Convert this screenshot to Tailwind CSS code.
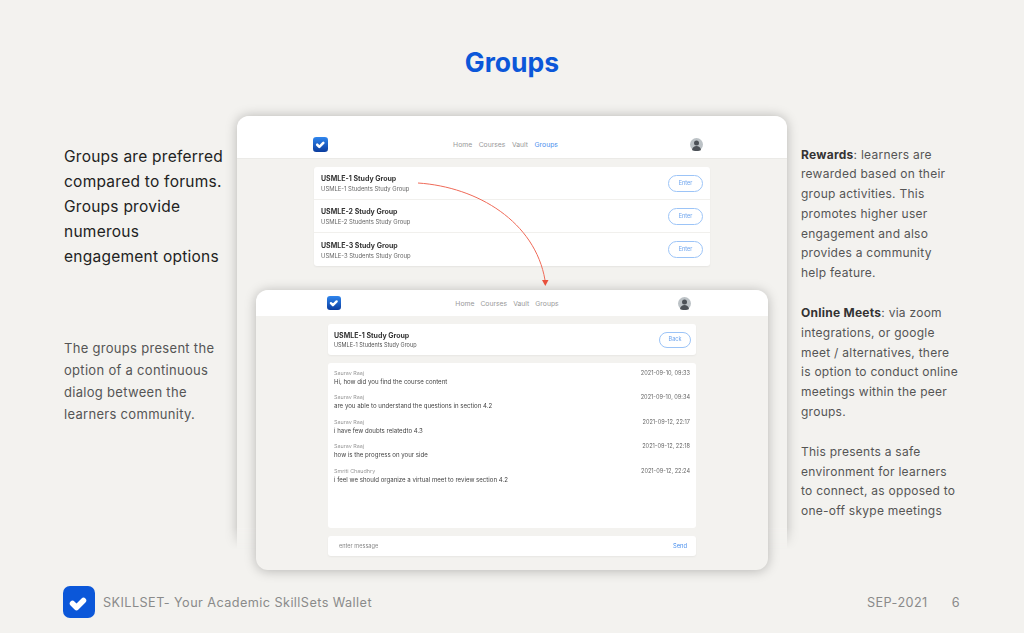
<!DOCTYPE html>
<html lang="en">
<head>
    <meta charset="UTF-8">
    <title>Groups</title>
    <script src="https://cdn.jsdelivr.net/npm/@tailwindcss/browser@4"></script>
</head>
<body class="bg-[#f3f2ef] font-['Inter',sans-serif]">
<div class="relative w-[1024px] h-[633px] overflow-hidden flex flex-col">

    <h1 class="pt-[45px] h-[116px] text-center text-[26.500px] leading-[34px] font-bold text-[#0b57d9]">Groups</h1>

    <div class="flex h-[470px]">
        <!-- left text -->
        <div class="w-[237px] pl-[64px] shrink-0 pt-[28px]">
            <p class="text-[15.500px] leading-[25px] text-[#222] tracking-[0.25px] whitespace-nowrap">Groups are preferred<br>compared to forums.<br>Groups provide<br>numerous<br>engagement options</p>
            <p class="mt-[68px] text-[13px] leading-[22px] text-[#555] tracking-[0.3px] whitespace-nowrap">The groups present the<br>option of a continuous<br>dialog between the<br>learners community.</p>
        </div>

        <!-- screens -->
        <div class="relative w-[550px] shrink-0">
            <div class="-mx-[20px] -mt-[20px] px-[20px] pt-[20px] [mask-image:linear-gradient(to_bottom,#000_95%,transparent)]">
            <div class="h-[434px] rounded-t-[12px] bg-[#f3f2ef] shadow-[0_0_12px_rgba(0,0,0,0.25)] blur-[0.3px]">
                <div class="h-[43px] rounded-t-[12px] bg-white border-b border-[#ebeae7] flex items-center justify-between pl-[76px] pr-[84px] pt-[14px]">
                    <svg class="w-[15px] h-[15px]" viewBox="0 0 32 32"><defs><linearGradient id="a" x1="0" y1="0" x2="0" y2="1"><stop offset="0" stop-color="#2f86ee"/><stop offset="1" stop-color="#0b3c9e"/></linearGradient></defs><rect width="32" height="32" rx="7" fill="url(#a)"/><path d="M9 16.500l4.500 4.500 8.500-8.500" fill="none" stroke="#fff" stroke-width="5.500" stroke-linecap="round" stroke-linejoin="round"/></svg>
                    <nav class="flex gap-[6.500px] text-[6.800px] text-[#999] mt-[2px] mr-[7px]"><span>Home</span><span>Courses</span><span>Vault</span><span class="text-[#4a90ee]">Groups</span></nav>
                    <svg class="w-[13px] h-[13px]" viewBox="0 0 26 26"><circle cx="13" cy="13" r="13" fill="#bcc2c6"/><circle cx="13" cy="10" r="5" fill="#4c5157"/><path d="M4 24c1-6 5-8 9-8s8 2 9 8c-2 1.500-5 2-9 2s-7-.5-9-2z" fill="#4c5157"/></svg>
                </div>
                <div class="ml-[77px] mt-[8px] w-[396px] bg-white rounded-[3px] shadow-[0_1px_2px_rgba(0,0,0,0.06)]">
                    <div class="h-[33px] flex items-center justify-between pl-[7px] pr-[7px] border-b border-[#f1f0ed]">
                        <div class="pt-[1px]"><p class="text-[7px] leading-[9px] font-bold text-[#333]">USMLE-1 Study Group</p><p class="text-[5.900px] leading-[9px] text-[#666] mt-[1px]">USMLE-1 Students Study Group</p></div>
                        <button class="w-[35px] h-[17px] rounded-full border border-[#9cc4f7] text-[5.500px] text-[#6ba3ee]">Enter</button>
                    </div>
                    <div class="h-[33px] flex items-center justify-between pl-[7px] pr-[7px] border-b border-[#f1f0ed]">
                        <div class="pt-[1px]"><p class="text-[7px] leading-[9px] font-bold text-[#333]">USMLE-2 Study Group</p><p class="text-[5.900px] leading-[9px] text-[#666] mt-[1px]">USMLE-2 Students Study Group</p></div>
                        <button class="w-[35px] h-[17px] rounded-full border border-[#9cc4f7] text-[5.500px] text-[#6ba3ee]">Enter</button>
                    </div>
                    <div class="h-[33px] flex items-center justify-between pl-[7px] pr-[7px]">
                        <div class="pt-[1px]"><p class="text-[7px] leading-[9px] font-bold text-[#333]">USMLE-3 Study Group</p><p class="text-[5.900px] leading-[9px] text-[#666] mt-[1px]">USMLE-3 Students Study Group</p></div>
                        <button class="w-[35px] h-[17px] rounded-full border border-[#9cc4f7] text-[5.500px] text-[#6ba3ee]">Enter</button>
                    </div>
                </div>
            </div>
            </div>

            <!-- arrow between the two screens -->
            <svg class="absolute left-0 top-0 w-[550px] h-[200px] z-20" viewBox="237 116 550 200" fill="none">
                <path d="M418 183C478 187 535 222 545 280" stroke="#ef6a58" stroke-width="1"/>
                <path d="M542 280h6.500l-3.200 6z" fill="#e8503c"/>
            </svg>

            <!-- chat window, lies over the first screen -->
            <div class="absolute left-[19px] top-[174px] w-[512px] h-[280px] z-10 rounded-[12px] bg-[#f3f2ef] shadow-[0_1px_12px_rgba(0,0,0,0.25)] blur-[0.3px]">
                <div class="h-[26px] rounded-t-[12px] bg-white flex items-center justify-between pl-[71px] pr-[77px]">
                    <svg class="w-[14px] h-[14px]" viewBox="0 0 32 32"><defs><linearGradient id="b" x1="0" y1="0" x2="0" y2="1"><stop offset="0" stop-color="#2f86ee"/><stop offset="1" stop-color="#0b3c9e"/></linearGradient></defs><rect width="32" height="32" rx="7" fill="url(#b)"/><path d="M9 16.500l4.500 4.500 8.500-8.500" fill="none" stroke="#fff" stroke-width="5.500" stroke-linecap="round" stroke-linejoin="round"/></svg>
                    <nav class="flex gap-[6px] text-[6.800px] text-[#999] mt-[2px] mr-[5px]"><span>Home</span><span>Courses</span><span>Vault</span><span>Groups</span></nav>
                    <svg class="w-[13px] h-[13px]" viewBox="0 0 26 26"><circle cx="13" cy="13" r="13" fill="#bcc2c6"/><circle cx="13" cy="10" r="5" fill="#4c5157"/><path d="M4 24c1-6 5-8 9-8s8 2 9 8c-2 1.500-5 2-9 2s-7-.5-9-2z" fill="#4c5157"/></svg>
                </div>
                <div class="mx-[72px] mt-[8px] flex flex-col gap-[8px]">
                    <div class="h-[31px] bg-white rounded-[3px] flex items-center justify-between pl-[6px] pr-[5px] shadow-[0_1px_2px_rgba(0,0,0,0.05)]">
                        <div class="pt-[1px]"><p class="text-[7px] leading-[9px] font-bold text-[#333]">USMLE-1 Study Group</p><p class="text-[5.500px] leading-[8px] text-[#555] mt-[1px]">USMLE-1 Students Study Group</p></div>
                        <button class="w-[32px] h-[16px] rounded-full border border-[#9cc4f7] text-[5.500px] text-[#6ba3ee]">Back</button>
                    </div>
                    <div class="h-[165px] bg-white rounded-[3px] px-[6px] pt-[6px] flex flex-col gap-[6.400px]">
                        <div class="flex justify-between h-[18px]"><div><p class="text-[5.400px] leading-[8px] text-[#999]">Saurav Raaj</p><p class="text-[6.100px] leading-[10px] text-[#444]">Hi, how did you find the course content</p></div><span class="text-[5.600px] leading-[8px] text-[#666]">2021-09-10, 09:33</span></div>
                        <div class="flex justify-between h-[18px]"><div><p class="text-[5.400px] leading-[8px] text-[#999]">Saurav Raaj</p><p class="text-[6.100px] leading-[10px] text-[#444]">are you able to understand the questions in section 4.2</p></div><span class="text-[5.600px] leading-[8px] text-[#666]">2021-09-10, 09:34</span></div>
                        <div class="flex justify-between h-[18px]"><div><p class="text-[5.400px] leading-[8px] text-[#999]">Saurav Raaj</p><p class="text-[6.100px] leading-[10px] text-[#444]">i have few doubts relatedto 4.3</p></div><span class="text-[5.600px] leading-[8px] text-[#666]">2021-09-12, 22:17</span></div>
                        <div class="flex justify-between h-[18px]"><div><p class="text-[5.400px] leading-[8px] text-[#999]">Saurav Raaj</p><p class="text-[6.100px] leading-[10px] text-[#444]">how is the progress on your side</p></div><span class="text-[5.600px] leading-[8px] text-[#666]">2021-09-12, 22:18</span></div>
                        <div class="flex justify-between h-[18px]"><div><p class="text-[5.400px] leading-[8px] text-[#999]">Smriti Chaudhry</p><p class="text-[6.100px] leading-[10px] text-[#444]">i feel we should organize a virtual meet to review section 4.2</p></div><span class="text-[5.600px] leading-[8px] text-[#666]">2021-09-12, 22:24</span></div>
                    </div>
                    <div class="h-[20px] bg-white rounded-[3px] flex items-center justify-between pl-[11px] pr-[9px] shadow-[0_1px_2px_rgba(0,0,0,0.05)]">
                        <span class="text-[5.600px] text-[#888]">enter message</span>
                        <span class="text-[5.800px] text-[#4a90ee]">Send</span>
                    </div>
                </div>
            </div>
        </div>

        <!-- right text -->
        <div class="pl-[14px] pt-[28.500px] text-[12px] leading-[19.800px] text-[#555] tracking-[0.26px] whitespace-nowrap">
            <p><b class="text-[#333] font-bold">Rewards</b>: learners are<br>rewarded based on their<br>group activities. This<br>promotes higher user<br>engagement and also<br>provides a community<br>help feature.</p>
            <p class="mt-[20px]"><b class="text-[#333] font-bold">Online Meets</b>: via zoom<br>integrations, or google<br>meet / alternatives, there<br>is option to conduct online<br>meetings within the peer<br>groups.</p>
            <p class="mt-[20px]">This presents a safe<br>environment for learners<br>to connect, as opposed to<br>one-off skype meetings</p>
        </div>
    </div>

    <!-- footer -->
    <footer class="flex-1 flex items-center pl-[63px] pr-[64px] pb-[15px] text-[12.700px] text-[#8a8a8a] tracking-[0.42px]">
        <svg class="w-[32px] h-[32px] shrink-0" viewBox="0 0 32 32"><rect width="32" height="32" rx="7" fill="#0b57d9"/><path d="M9.500 17.500l4 4 7-7" fill="none" stroke="#fff" stroke-width="5.500" stroke-linecap="round" stroke-linejoin="round"/></svg>
        <span class="ml-[8px] mt-[2px]">SKILLSET- Your Academic SkillSets Wallet</span>
        <span class="ml-auto mt-[2px]">SEP-2021</span>
        <span class="ml-[24px] mt-[2px]">6</span>
    </footer>
</div>
</body>
</html>
